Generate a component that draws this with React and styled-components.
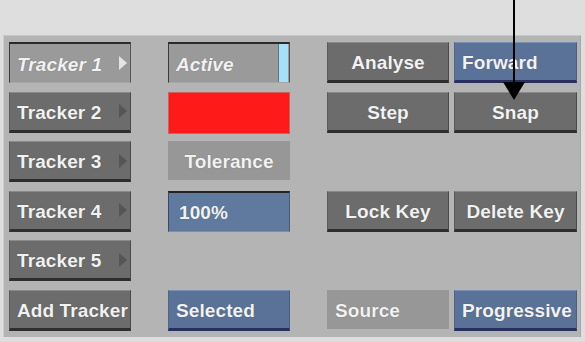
import React from 'react';
import styled, { createGlobalStyle, css } from 'styled-components';

const GlobalStyle = createGlobalStyle`
  html, body {
    margin: 0;
    padding: 0;
    background: #dedede;
  }
  body {
    width: 585px;
    height: 342px;
    overflow: hidden;
    font-family: "Liberation Sans", Arial, sans-serif;
  }
`;

const Screen = styled.div`
  position: relative;
  width: 585px;
  height: 342px;
  padding: 35px 4px 5px 3px;
  box-sizing: border-box;
`;

const Panel = styled.div`
  height: 100%;
  box-sizing: border-box;
  background: #b4b4b4;
  border-top: 1px solid #c8c8c8;
  border-left: 1px solid #cdcdcd;
  border-right: 1px solid #a8a8a8;
  padding: 6px 0 0 5px;
  display: grid;
  grid-template-columns: 122px 37px 122px 37px 122px 5px 123px;
  grid-template-rows: repeat(6, 41px);
  row-gap: 8.5px;
`;

const Cell = styled.div`
  grid-column: ${(p) => p.col * 2 - 1};
  grid-row: ${(p) => p.row};
  box-sizing: border-box;
  display: flex;
  align-items: center;
  justify-content: ${(p) => (p.center ? 'center' : 'flex-start')};
  padding: 3px ${(p) => (p.center ? '0' : '7px')} 0;
  color: #f2f2f2;
  font-size: 19px;
  font-weight: bold;
  letter-spacing: 0.1px;
  white-space: nowrap;
  text-shadow: 0 0 1px rgba(0, 0, 0, 0.35);
`;

const Button = styled(Cell)`
  background: #6c6c6c;
  border-top: 1px solid #8a8a8a;
  border-bottom: 3px solid #2e2e2e;
  border-left: 1px solid #5a5a5a;
  border-right: 1px solid #4a4a4a;
  ${(p) =>
    p.pressed &&
    css`
      background: #9a9a9a;
      border-top: 2px solid #2a2a2a;
      border-left: 1px solid #3a3a3a;
      border-right: 1px solid #555;
      border-bottom: 1px solid #a6a6a6;
      font-style: italic;
    `}
  ${(p) =>
    p.blue &&
    css`
      background: #5a7298;
      border-top: 1px solid #7a90b2;
      border-left: 1px solid #4e6588;
      border-right: 1px solid #4a5f80;
      border-bottom: 3px solid #26305a;
    `}
`;

const Field = styled(Cell)`
  background: #5f7a9e;
  border-top: 2px solid #222;
  border-left: 1px solid #3a4a60;
  border-right: 1px solid #4a5a70;
  border-bottom: 1px solid #7a8fae;
  padding-left: 10px;
`;

const Label = styled(Cell)`
  background: #979797;
  height: 39px;
  align-self: start;
  padding-left: ${(p) => (p.center ? '0' : '8px')};
`;

const Swatch = styled.div`
  grid-column: 3;
  grid-row: 2;
  background: #ff1a1a;
  border: 1px solid #d06060;
  height: 40px;
`;

const Name = styled.span`
  flex: 1;
`;

const Caret = styled.span`
  width: 0;
  height: 0;
  margin: 0 -4px 3px 0;
  border-top: 7px solid transparent;
  border-bottom: 7px solid transparent;
  border-left: 8px solid ${(p) => (p.lit ? '#e4e4e4' : '#555')};
`;

const ActiveStrip = styled.span`
  width: 9px;
  align-self: stretch;
  margin: -3px 1px 0 auto;
  background: #a6dff8;
  border-left: 1px solid #5a7a8a;
`;

const Pointer = styled.svg`
  position: absolute;
  left: 500px;
  top: 0;
  width: 30px;
  height: 104px;
`;

const trackers = ['Tracker 1', 'Tracker 2', 'Tracker 3', 'Tracker 4', 'Tracker 5'];

export default function App() {
  return (
    <>
      <GlobalStyle />
      <Screen>
        <Panel>
          {trackers.map((t, i) => (
            <Button key={t} col={1} row={i + 1} pressed={i === 0}>
              <Name>{t}</Name>
              <Caret lit={i === 0} />
            </Button>
          ))}
          <Button col={1} row={6}>Add Tracker</Button>

          <Button col={2} row={1} pressed style={{ paddingRight: 0 }}>
            <span>Active</span>
            <ActiveStrip />
          </Button>
          <Swatch />
          <Label col={2} row={3} center>Tolerance</Label>
          <Field col={2} row={4}>100%</Field>
          <Button col={2} row={6} blue>Selected</Button>

          <Button col={3} row={1} center>Analyse</Button>
          <Button col={4} row={1} blue>Forward</Button>
          <Button col={3} row={2} center>Step</Button>
          <Button col={4} row={2} center>Snap</Button>
          <Button col={3} row={4} center>Lock Key</Button>
          <Button col={4} row={4} center>Delete Key</Button>
          <Label col={3} row={6}>Source</Label>
          <Button col={4} row={6} blue>Progressive</Button>
        </Panel>
        <Pointer viewBox="500 0 30 104">
          <line x1="514" y1="0" x2="514" y2="84" stroke="#000" strokeWidth="2" />
          <polygon points="503,82 525,82 514,100" fill="#000" />
        </Pointer>
      </Screen>
    </>
  );
}
